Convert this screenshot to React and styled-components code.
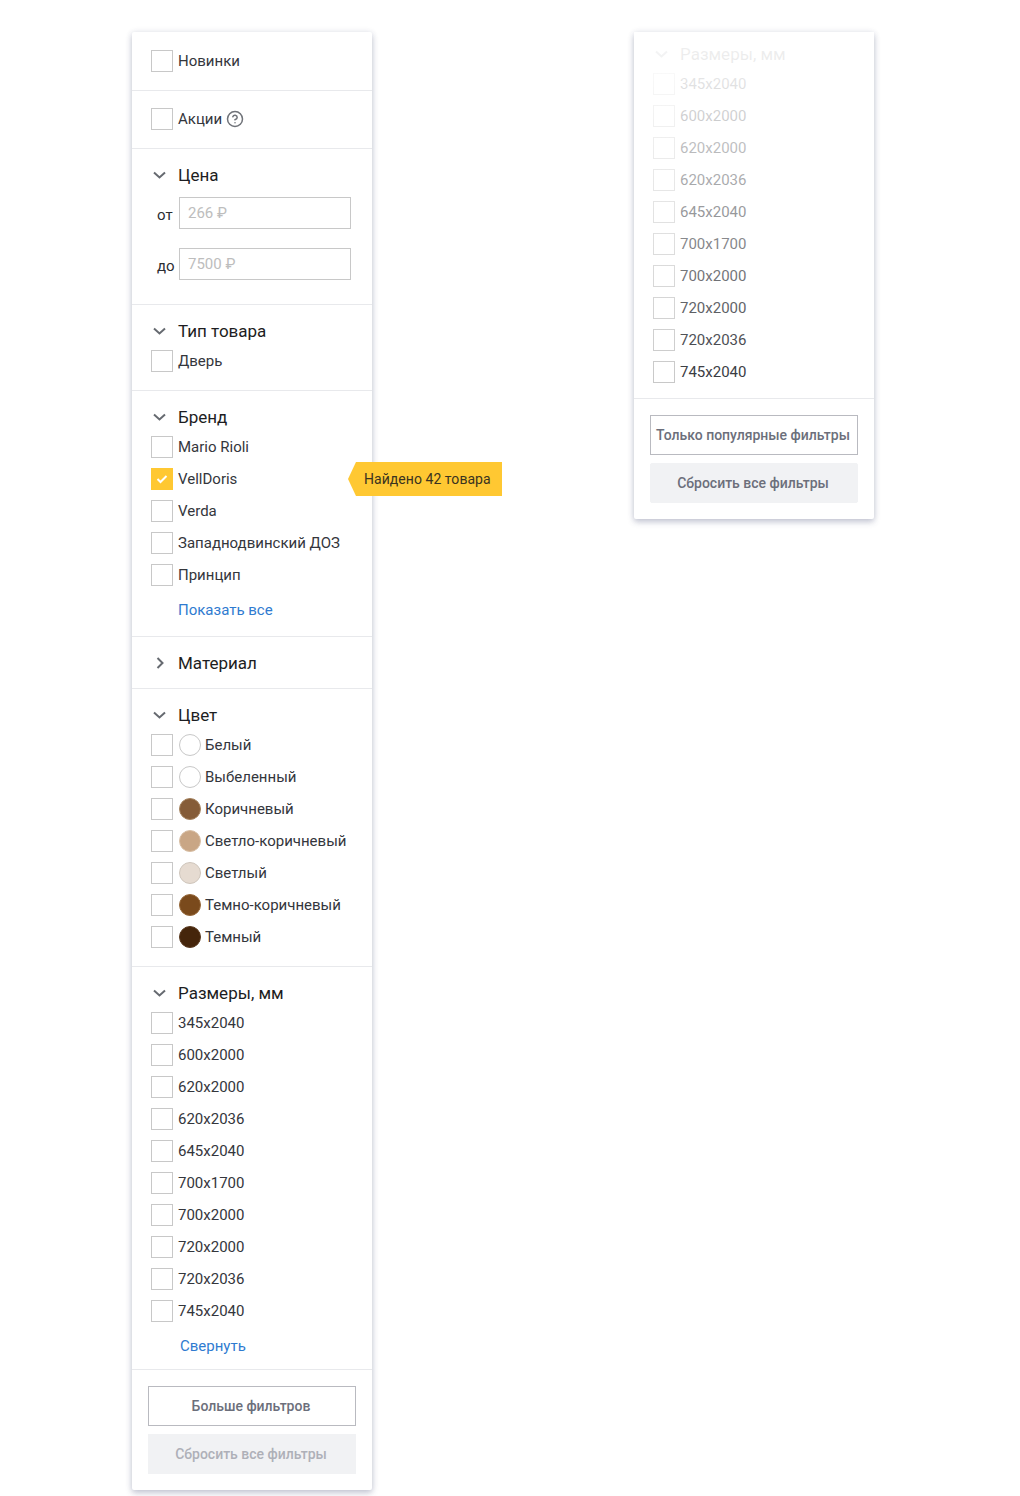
import styled, { createGlobalStyle } from "styled-components";
import { CircleHelp } from "lucide-react";

const GlobalStyle = createGlobalStyle`
    body {
        margin: 0;
        background: #fff;
        font-family: Roboto, "Liberation Sans", sans-serif;
    }
`;

const Page = styled.div`
    display: flex;
    align-items: flex-start;
    gap: 262px;
    padding: 32px 0 6px 132px;
`;

const Panel = styled.div`
    position: relative;
    width: 240px;
    background: #fff;
    border-radius: 2px;
    box-shadow: 0 3px 6px rgba(60, 70, 110, 0.28), 0 0 6px rgba(60, 70, 110, 0.1);
`;

const Fade = styled.div`
    position: absolute;
    top: 0;
    left: 0;
    right: 0;
    height: 352px;
    pointer-events: none;
    background: linear-gradient(rgba(255, 255, 255, 0.95), rgba(255, 255, 255, 0.9) 10%, rgba(255, 255, 255, 0));
`;

const Section = styled.div`
    padding: ${(p) => p.$top ?? 16}px 16px ${(p) => p.$bottom ?? 13}px 19px;
    border-bottom: 1px solid #e8e9ec;
`;

const TitleRow = styled.div`
    display: flex;
    align-items: center;
    height: 20px;
    margin-bottom: ${(p) => (p.$closed ? 0 : 4)}px;
    font-size: 17px;
    color: #1d1d22;
`;

const ChevronBox = styled.svg`
    width: 27px;
    height: 14px;
    flex: none;
    fill: none;
    stroke: #666a70;
    stroke-width: 2;
`;

const Row = styled.label`
    display: flex;
    align-items: center;
    height: 32px;
    font-size: 15px;
    color: #34363c;
    white-space: nowrap;
`;

const Box = styled.span`
    box-sizing: border-box;
    width: 22px;
    height: 22px;
    flex: none;
    margin-right: 5px;
    display: flex;
    align-items: center;
    justify-content: center;
    border: 1px solid ${(p) => (p.$checked ? "#ffc832" : "#c8c8c8")};
    background: ${(p) => (p.$checked ? "#ffc832" : "#fff")};
`;

const Swatch = styled.span`
    box-sizing: border-box;
    width: 22px;
    height: 22px;
    flex: none;
    margin: 0 4px 0 1px;
    border-radius: 50%;
    border: 1px solid ${(p) => p.$edge};
    background: ${(p) => p.$color};
`;

const HelpIcon = styled(CircleHelp)`
    width: 18px;
    height: 18px;
    margin-left: 4px;
    color: #6f7278;
`;

const PriceRow = styled.div`
    display: flex;
    align-items: center;
    margin-top: ${(p) => p.$gap}px;
`;

const PriceLabel = styled.span`
    width: 28px;
    flex: none;
    padding: 4px 0 0 6px;
    box-sizing: border-box;
    font-size: 15px;
    color: #2c2d32;
`;

const PriceInput = styled.input`
    box-sizing: border-box;
    width: 172px;
    height: 32px;
    padding: 0 8px;
    border: 1px solid #c8c8c8;
    border-radius: 0;
    outline: none;
    font-family: inherit;
    font-size: 15px;
    &::placeholder {
        color: #bdbdbd;
        opacity: 1;
    }
`;

const TextLink = styled.a`
    display: block;
    height: 20px;
    margin: 9px 0 ${(p) => p.$after ?? 0}px ${(p) => p.$indent}px;
    font-size: 15px;
    line-height: 20px;
    color: #2f7bd0;
`;

const Footer = styled.div`
    display: flex;
    flex-direction: column;
    gap: 8px;
    padding: 16px;
`;

const Button = styled.button`
    box-sizing: border-box;
    width: 208px;
    height: 40px;
    padding: 0 2px 0 0;
    border: 1px solid ${(p) => (p.$filled ? "#f1f2f4" : "#b9bac0")};
    background: ${(p) => (p.$filled ? "#f1f2f4" : "#fff")};
    color: ${(p) => (p.$muted ? "#aeb0b8" : "#6c6f7b")};
    font-family: inherit;
    font-size: 14px;
    font-weight: 500;
    border-radius: ${(p) => (p.$rounded ? 2 : 0)}px;
`;

const Found = styled.div`
    position: absolute;
    top: 430px;
    left: 216px;
    z-index: 2;
    display: flex;
    align-items: center;
    width: 154px;
    height: 34px;
    box-sizing: border-box;
    padding-left: 16px;
    background: #ffc832;
    clip-path: polygon(8px 0, 100% 0, 100% 100%, 8px 100%, 0 50%);
    font-size: 14px;
    letter-spacing: 0.05px;
    color: #3a3320;
    white-space: nowrap;
`;

const brands = ["Mario Rioli", "VellDoris", "Verda", "Западнодвинский ДОЗ", "Принцип"];
const colors = [
    ["Белый", "#fff", "#c8c8c8"],
    ["Выбеленный", "#fff", "#c8c8c8"],
    ["Коричневый", "#855c38", "#a5835f"],
    ["Светло-коричневый", "#c9a685", "#d8bfa5"],
    ["Светлый", "#e6dbd1", "#cfc6bc"],
    ["Темно-коричневый", "#7a4a1c", "#96683a"],
    ["Темный", "#45250b", "#5a3a20"],
];
const sizes = ["345x2040", "600x2000", "620x2000", "620x2036", "645x2040", "700x1700", "700x2000", "720x2000", "720x2036", "745x2040"];

function Title({ closed, children }) {
    return (
        <TitleRow $closed={closed}>
            <ChevronBox viewBox="0 0 27 14">
                {closed ? <polyline points="6.5,2 11.5,7 6.5,12" /> : <polyline points="3,4.5 8.5,9.5 14,4.5" />}
            </ChevronBox>
            {children}
        </TitleRow>
    );
}

function Check({ checked, children }) {
    return (
        <Row>
            <Box $checked={checked}>
                {checked && (
                    <svg width="12" height="10" viewBox="0 0 12 10" fill="none" stroke="#fff" strokeWidth="2">
                        <polyline points="1.5,5 4.5,8 10.5,2" />
                    </svg>
                )}
            </Box>
            {children}
        </Row>
    );
}

export default function App() {
    return (
        <Page>
            <GlobalStyle />
            <Panel>
                <Section $top={13}>
                    <Check>Новинки</Check>
                </Section>
                <Section $top={12}>
                    <Check>
                        Акции
                        <HelpIcon strokeWidth={2} />
                    </Check>
                </Section>
                <Section $bottom={24}>
                    <Title>Цена</Title>
                    <PriceRow $gap={12}>
                        <PriceLabel>от</PriceLabel>
                        <PriceInput placeholder="266 ₽" />
                    </PriceRow>
                    <PriceRow $gap={19}>
                        <PriceLabel>до</PriceLabel>
                        <PriceInput placeholder="7500 ₽" />
                    </PriceRow>
                </Section>
                <Section>
                    <Title>Тип товара</Title>
                    <Check>Дверь</Check>
                </Section>
                <Section>
                    <Title>Бренд</Title>
                    {brands.map((name) => (
                        <Check key={name} checked={name === "VellDoris"}>
                            {name}
                        </Check>
                    ))}
                    <TextLink $indent={27} $after={3}>Показать все</TextLink>
                </Section>
                <Section $bottom={15}>
                    <Title closed>Материал</Title>
                </Section>
                <Section>
                    <Title>Цвет</Title>
                    {colors.map(([name, color, edge]) => (
                        <Check key={name}>
                            <Swatch $color={color} $edge={edge} />
                            {name}
                        </Check>
                    ))}
                </Section>
                <Section>
                    <Title>Размеры, мм</Title>
                    {sizes.map((size) => (
                        <Check key={size}>{size}</Check>
                    ))}
                    <TextLink $indent={29}>Свернуть</TextLink>
                </Section>
                <Footer>
                    <Button>Больше фильтров</Button>
                    <Button $filled $muted>Сбросить все фильтры</Button>
                </Footer>
                <Found>Найдено 42 товара</Found>
            </Panel>
            <Panel>
                <Section $top={12} $bottom={10}>
                    <Title>Размеры, мм</Title>
                    {sizes.map((size) => (
                        <Check key={size}>{size}</Check>
                    ))}
                </Section>
                <Footer>
                    <Button>Только популярные фильтры</Button>
                    <Button $filled $rounded>Сбросить все фильтры</Button>
                </Footer>
                <Fade />
            </Panel>
        </Page>
    );
}
